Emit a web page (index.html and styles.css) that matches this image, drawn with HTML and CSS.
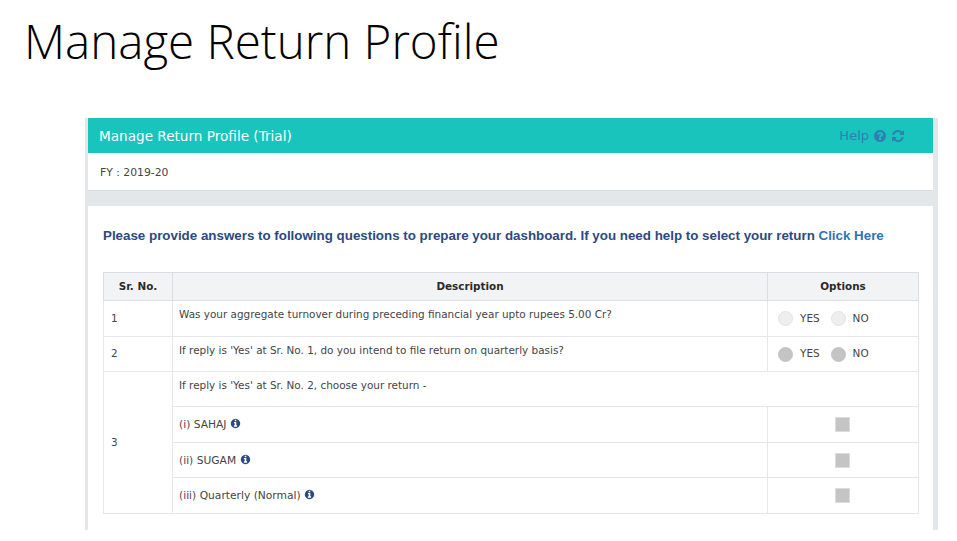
FILE: index.html
```html
<!DOCTYPE html>
<html lang="en">
<head>
  <meta charset="UTF-8" />
  <title>Manage Return Profile</title>
  <link rel="stylesheet" href="styles.css">
</head>
<body>
  <svg class="icon-defs" width="0" height="0">
    <symbol id="i-question" viewBox="0 0 1792 1792"><path d="M1024 1376v-192q0-14-9-23t-23-9h-192q-14 0-23 9t-9 23v192q0 14 9 23t23 9h192q14 0 23-9t9-23zm256-672q0-88-55.5-163t-138.5-116-170-41q-243 0-371 213-15 24 8 42l132 100q7 6 19 6 16 0 25-12 53-68 86-92 34-24 86-24 48 0 85.5 26t37.5 59q0 38-20 61t-68 45q-63 28-115.5 86.5t-52.5 125.5v36q0 14 9 23t23 9h192q14 0 23-9t9-23q0-19 21.5-49.5t54.5-49.5q32-18 49-28.5t46-35 44.5-48 28-60.5 12.5-81zm384 192q0 209-103 385.5t-279.5 279.5-385.5 103-385.5-103-279.5-279.5-103-385.5 103-385.5 279.5-279.5 385.5-103 385.5 103 279.5 279.5 103 385.5z"/></symbol>
    <symbol id="i-refresh" viewBox="0 0 1792 1792"><path d="M1639 1056q0 5-1 7-64 268-268 434.5t-478 166.5q-146 0-282.5-55t-243.5-157l-129 129q-19 19-45 19t-45-19-19-45v-448q0-26 19-45t45-19h448q26 0 45 19t19 45-19 45l-137 137q71 66 161 102t187 36q134 0 250-65t186-179q11-17 53-117 8-23 30-23h192q13 0 22.5 9.5t9.5 22.5zm25-800v448q0 26-19 45t-45 19h-448q-26 0-45-19t-19-45 19-45l138-138q-148-137-349-137-134 0-250 65t-186 179q-11 17-53 117-8 23-30 23h-199q-13 0-22.5-9.5t-9.5-22.5v-7q65-268 270-434.5t480-166.5q146 0 284 55.5t245 156.5l130-129q19-19 45-19t45 19 19 45z"/></symbol>
    <symbol id="i-info" viewBox="0 0 1792 1792"><path d="M1152 1376v-160q0-14-9-23t-23-9h-96v-512q0-14-9-23t-23-9h-320q-14 0-23 9t-9 23v160q0 14 9 23t23 9h96v320h-96q-14 0-23 9t-9 23v160q0 14 9 23t23 9h448q14 0 23-9t9-23zm-128-896v-160q0-14-9-23t-23-9h-192q-14 0-23 9t-9 23v160q0 14 9 23t23 9h192q14 0 23-9t9-23zm640 416q0 209-103 385.5t-279.5 279.5-385.5 103-385.5-103-279.5-279.5-103-385.5 103-385.5 279.5-279.5 385.5-103 385.5 103 279.5 279.5 103 385.5z"/></symbol>
  </svg>

  <h1 class="slide-title">Manage Return Profile</h1>

  <div class="panel">
    <div class="panel-head">
      <span class="panel-name">Manage Return Profile (Trial)</span>
      <span class="panel-help">
        Help
        <svg class="icon-help"><use href="#i-question"/></svg>
        <svg class="icon-help"><use href="#i-refresh"/></svg>
      </span>
    </div>
    <div class="panel-fy">FY : 2019-20</div>

    <div class="panel-body">
      <p class="intro">Please provide answers to following questions to prepare your dashboard. If you need help to select your return <a href="#">Click Here</a></p>

      <table class="questions">
        <colgroup>
          <col class="col-sr">
          <col>
          <col class="col-opt">
        </colgroup>
        <thead>
          <tr>
            <th>Sr. No.</th>
            <th>Description</th>
            <th>Options</th>
          </tr>
        </thead>
        <tbody>
          <tr class="row-tall">
            <td class="sr">1</td>
            <td class="desc">Was your aggregate turnover during preceding financial year upto rupees 5.00 Cr?</td>
            <td>
              <div class="choices">
                <span class="radio"></span><span class="choice-label">YES</span>
                <span class="radio"></span><span class="choice-label">NO</span>
              </div>
            </td>
          </tr>
          <tr>
            <td class="sr">2</td>
            <td class="desc">If reply is 'Yes' at Sr. No. 1, do you intend to file return on quarterly basis?</td>
            <td>
              <div class="choices">
                <span class="radio radio-off"></span><span class="choice-label">YES</span>
                <span class="radio radio-off"></span><span class="choice-label">NO</span>
              </div>
            </td>
          </tr>
          <tr>
            <td class="sr" rowspan="4">3</td>
            <td class="desc" colspan="2">If reply is 'Yes' at Sr. No. 2, choose your return -</td>
          </tr>
          <tr class="row-tall">
            <td class="item"><span class="roman">(i)</span> SAHAJ <svg class="icon-info"><use href="#i-info"/></svg></td>
            <td class="check-cell"><span class="check"></span></td>
          </tr>
          <tr>
            <td class="item"><span class="roman">(ii)</span> SUGAM <svg class="icon-info"><use href="#i-info"/></svg></td>
            <td class="check-cell"><span class="check"></span></td>
          </tr>
          <tr class="row-tall">
            <td class="item"><span class="roman">(iii)</span> Quarterly (Normal) <svg class="icon-info"><use href="#i-info"/></svg></td>
            <td class="check-cell"><span class="check"></span></td>
          </tr>
        </tbody>
      </table>
    </div>
  </div>
</body>
</html>
```

FILE: styles.css
```css
* {
  box-sizing: border-box;
  margin: 0;
  padding: 0;
}

html, body {
  height: 541px;
  overflow: hidden;
}

body {
  background-color: #fff;
  font-family: "DejaVu Sans", sans-serif;
  color: #444;
}

.icon-defs {
  display: block;
  height: 0;
}

.slide-title {
  height: 118px;
  padding: 9px 0 0 24px;
  font-family: "Open Sans", sans-serif;
  font-weight: 350;
  font-size: 47.5px;
  line-height: 64px;
  color: #000;
}

.panel {
  width: 853px;
  height: 412px;
  margin-left: 85px;
  padding: 0 5px 0 3px;
  background-color: #e4e7ea;
}

.panel-head {
  display: flex;
  justify-content: space-between;
  align-items: center;
  height: 35px;
  padding: 0 28px 0 11px;
  background-color: #18c4bb;
  color: #fff;
  font-size: 13.6px;
}

.panel-help {
  display: flex;
  align-items: center;
  gap: 4px;
  color: #2f7fb5;
  font-size: 13px;
}

.icon-help {
  width: 14px;
  height: 14px;
  fill: #2f7fb5;
}

.panel-fy {
  height: 38px;
  padding: 1px 12px 0;
  line-height: 37px;
  font-size: 10.8px;
  background-color: #fff;
  border-bottom: 1px solid #d9dbdd;
}

.panel-body {
  height: 324px;
  margin-top: 15px;
  padding: 0 14px 0 15px;
  background-color: #fff;
}

.intro {
  padding-top: 21px;
  height: 66px;
  font-family: "Liberation Sans", sans-serif;
  font-weight: 700;
  font-size: 13.35px;
  line-height: 17px;
  color: #2b4a80;
  white-space: nowrap;
}

.intro a {
  color: #2f75b5;
  text-decoration: none;
}

.questions {
  width: 816px;
  border-collapse: collapse;
  table-layout: fixed;
  font-size: 10.45px;
}

.col-sr {
  width: 69px;
}

.col-opt {
  width: 151px;
}

.questions th,
.questions td {
  border: 1px solid #e6e7e9;
}

.questions th {
  height: 28px;
  padding-bottom: 2px;
  background-color: #f2f3f5;
  border-color: #dcdde0;
  font-size: 10.4px;
  color: #2a2a2a;
}

.questions td {
  height: 35px;
  padding: 0 6px;
  text-align: center;
}

.questions .row-tall td {
  height: 36px;
}

.questions td.sr {
  padding: 0 0 2px 7px;
  text-align: left;
}

.questions td.desc {
  padding-bottom: 9px;
  text-align: left;
}

.questions td.item {
  font-size: 10.7px;
  text-align: left;
}

.questions td.check-cell {
  padding: 0 8px 0 6px;
}

.roman {
  color: #5f4444;
}

.icon-info {
  width: 11px;
  height: 11px;
  fill: #2b4a80;
  vertical-align: -1px;
}

.choices {
  display: flex;
  align-items: center;
  padding-left: 4px;
}

.radio {
  width: 15px;
  height: 15px;
  margin-right: 7px;
  border-radius: 50%;
  background-color: #eee;
  border: 1px solid #e2e2e2;
}

.radio-off {
  background-color: #c4c4c4;
  border-color: #c4c4c4;
}

.choice-label {
  margin: 0 11px 2px 0;
}

.check {
  display: block;
  width: 15px;
  height: 15px;
  margin: 0 auto;
  background-color: #c4c4c4;
  border: 1px solid #dcdcdc;
}
```
